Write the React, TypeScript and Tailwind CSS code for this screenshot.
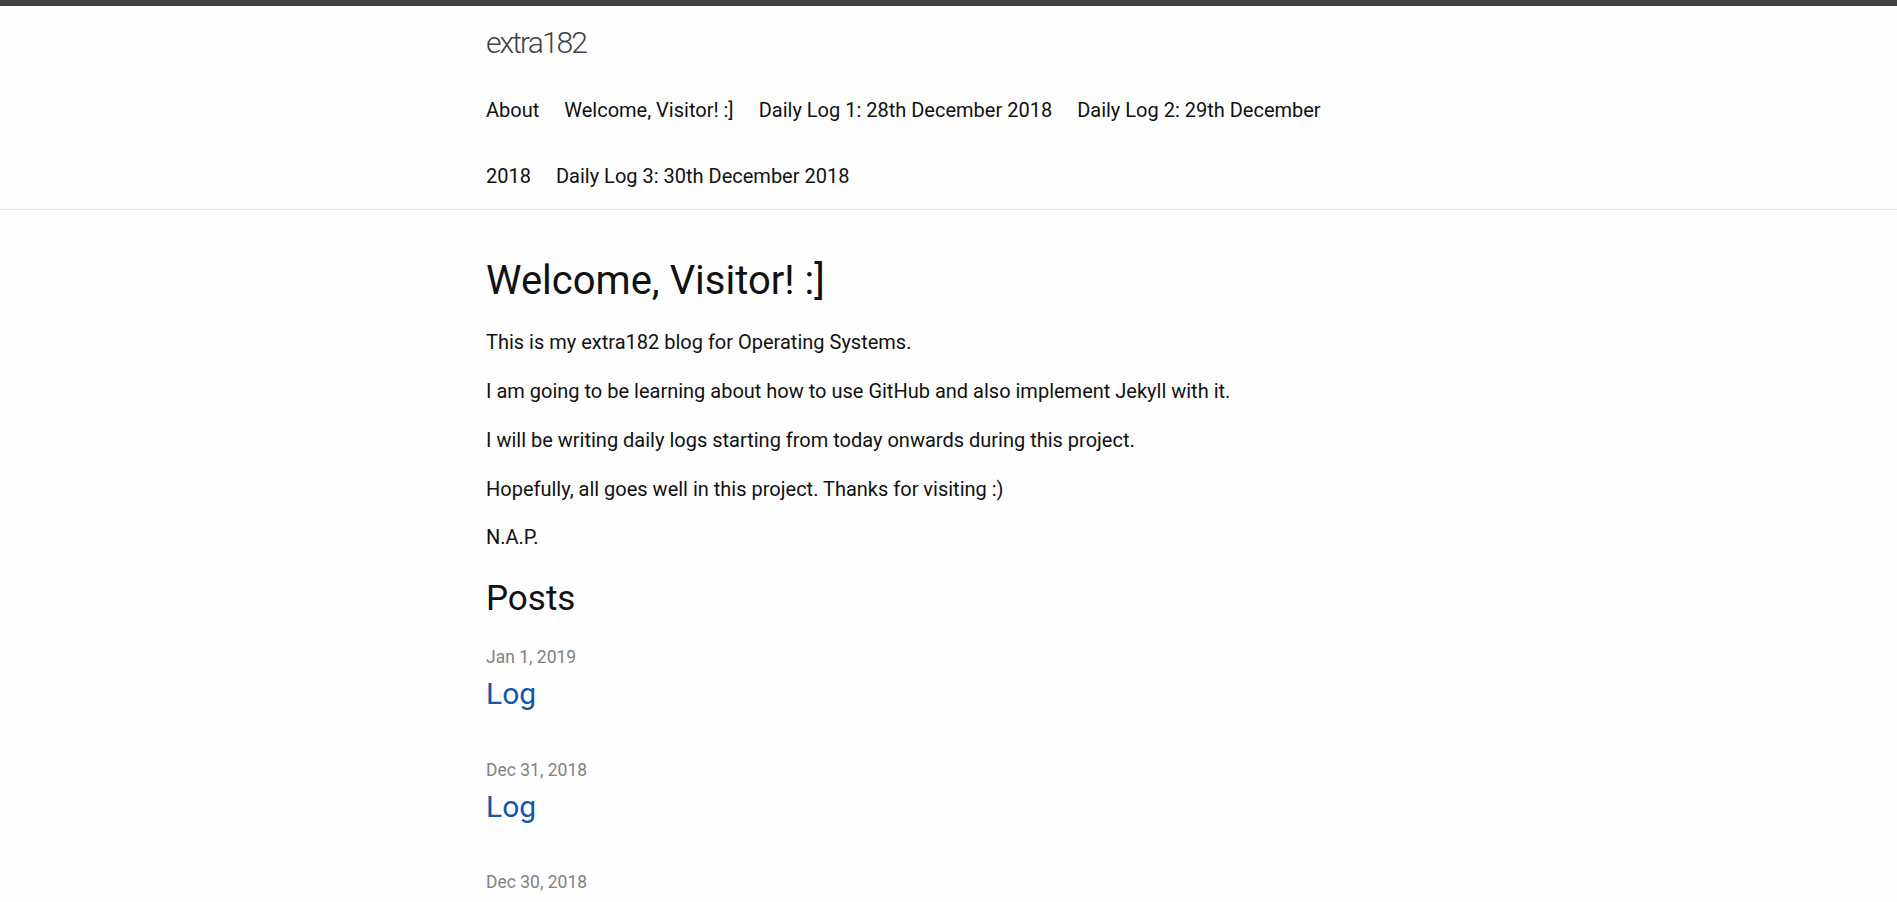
import React from "react";

const posts = [
  { date: "Jan 1, 2019", title: "Log" },
  { date: "Dec 31, 2018", title: "Log" },
  { date: "Dec 30, 2018", title: "Daily Log 3: 30th December 2018" },
  { date: "Dec 29, 2018", title: "Daily Log 2: 29th December 2018" },
  { date: "Dec 28, 2018", title: "Daily Log 1: 28th December 2018" },
];

export default function App() {
  return (
    <div
      className="min-h-screen bg-[#fdfdfd] text-[#111111] text-[20px] leading-[1.5]"
      style={{ fontFamily: 'Roboto, "Noto Sans", sans-serif' }}
    >
      <header className="border-t-[6.25px] border-t-[#424242] border-b-[1.25px] border-b-[#e8e8e8] min-h-[70px]">
        <div className="max-w-[1000px] mx-auto px-[37.5px]">
          <a
            href="#"
            className="block w-fit pt-[6px] text-[30px] font-light leading-[62px] tracking-[-1.9px] text-[#424242]"
          >
            extra182
          </a>
          <nav className="pt-[4px] leading-[65.5px] text-[20px]">
            <a href="#" className="text-[#111111] mr-[25px]">About</a>
            <a href="#" className="text-[#111111] mr-[25px]">Welcome, Visitor! :]</a>
            <a href="#" className="text-[#111111] mr-[25px]">Daily Log 1: 28th December 2018</a>
            <a href="#" className="text-[#111111] mr-[25px]">
              Daily Log 2: 29th December
              <br />
              2018
            </a>
            <a href="#" className="text-[#111111]">Daily Log 3: 30th December 2018</a>
          </nav>
        </div>
      </header>

      <main className="py-[37.5px]">
        <div className="max-w-[1000px] mx-auto px-[37.5px]">
          <h1 className="mt-[3px] text-[40px] leading-[60px] font-normal mb-[15.75px]">Welcome, Visitor! :]</h1>
          <p className="pt-[1px] mb-[17.75px]">This is my extra182 blog for Operating Systems.</p>
          <p className="pt-[1px] mb-[17.75px]">I am going to be learning about how to use GitHub and also implement Jekyll with it.</p>
          <p className="pt-[1px] mb-[17.75px]">I will be writing daily logs starting from today onwards during this project.</p>
          <p className="pt-[1px] mb-[17.75px]">Hopefully, all goes well in this project. Thanks for visiting :)</p>
          <p className="pt-[1px] mb-[17.75px]">N.A.P.</p>

          <h2 className="pt-[3px] text-[35px] leading-[52.5px] font-normal mb-[15.75px]">Posts</h2>
          <ul>
            {posts.map((p, i) => (
              <li key={i} className="mb-[37.5px]">
                <span className="text-[17.5px] text-[#828282]">{p.date}</span>
                <h3 className="mb-[18.75px]">
                  <a href="#" className="block text-[30px] leading-[45px] text-[#1756a9]">
                    {p.title}
                  </a>
                </h3>
              </li>
            ))}
          </ul>
        </div>
      </main>
    </div>
  );
}
